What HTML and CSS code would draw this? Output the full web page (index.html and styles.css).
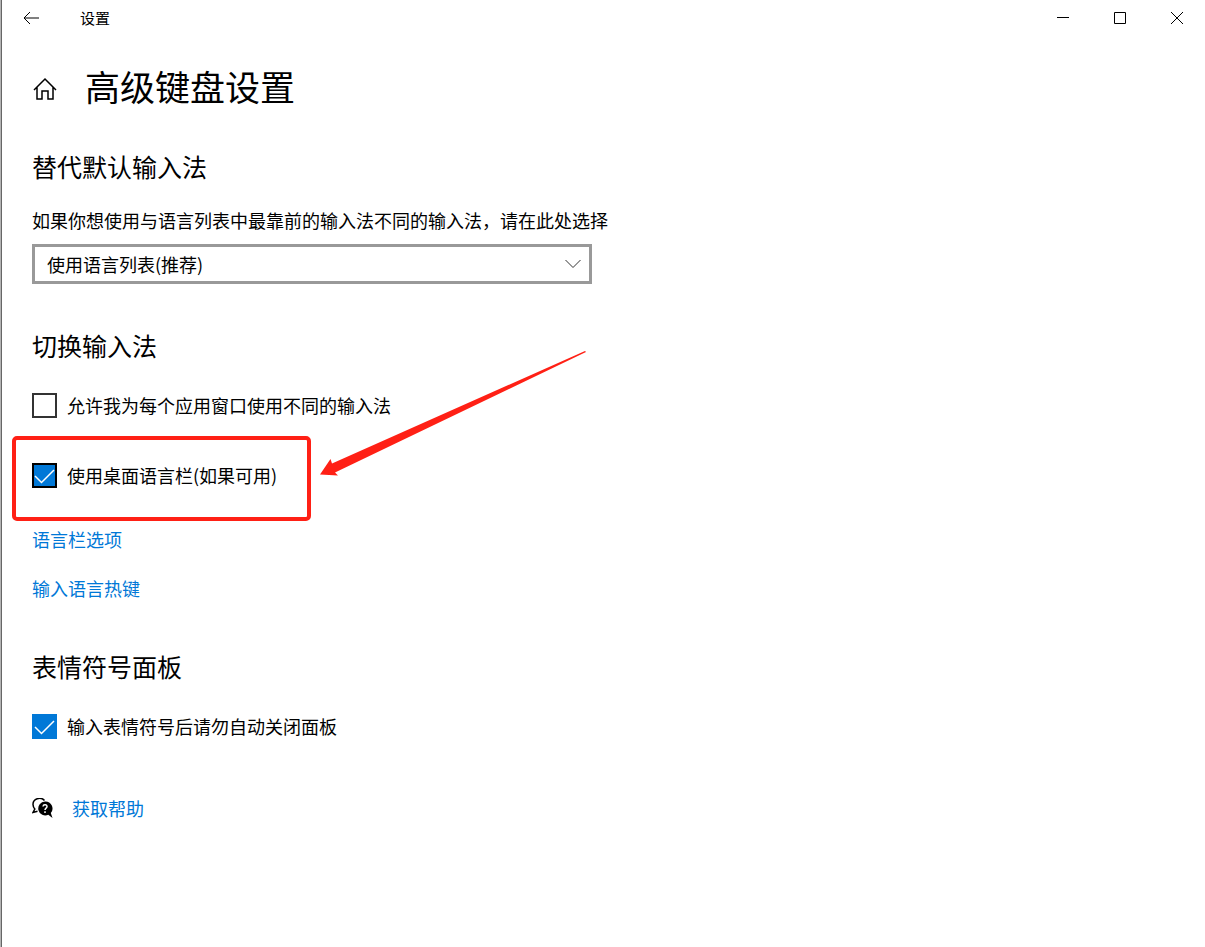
FILE: index.html
```html
<!DOCTYPE html>
<html lang="zh-CN">
<head>
    <meta charset="UTF-8">
    <meta name="viewport" content="width=device-width, initial-scale=1.0">
    <title>设置</title>
    <link rel="stylesheet" href="styles.css">
</head>
<body>
    <div class="window">
        <header class="titlebar">
            <button type="button" class="back" aria-label="返回">
                <svg width="16" height="14" viewBox="0 0 16 14"><path d="M7 1L1 7l6 6M1 7h15" /></svg>
            </button>
            <span class="app-name">设置</span>
            <div class="window-buttons">
                <button type="button" aria-label="最小化">
                    <svg width="12" height="12" viewBox="0 0 12 12"><path d="M0 5.5h12" /></svg>
                </button>
                <button type="button" aria-label="最大化">
                    <svg width="12" height="12" viewBox="0 0 12 12"><path d="M.5.5h11v11H.5z" /></svg>
                </button>
                <button type="button" aria-label="关闭">
                    <svg width="12" height="12" viewBox="0 0 12 12"><path d="M0 0l12 12M12 0L0 12" /></svg>
                </button>
            </div>
        </header>

        <main class="content">
            <div class="page-title">
                <button type="button" class="home" aria-label="主页">
                    <svg width="24" height="24" viewBox="0 0 24 24"><path d="M1 13L12 2l11 11M4 10.500v11.500h5v-8h6v8h5V10.500" /></svg>
                </button>
                <h1>高级键盘设置</h1>
            </div>

            <section>
                <h2>替代默认输入法</h2>
                <label class="description" for="inputMethod">如果你想使用与语言列表中最靠前的输入法不同的输入法，请在此处选择</label>
                <div class="dropdown">
                    <select id="inputMethod">
                        <option>使用语言列表(推荐)</option>
                    </select>
                    <svg width="16" height="10" viewBox="0 0 16 10"><path d="M.5 1L8 8.500 15.500 1" /></svg>
                </div>
            </section>

            <section>
                <h2>切换输入法</h2>
                <div class="options">
                    <div class="option">
                        <input type="checkbox" id="perApp">
                        <label for="perApp">允许我为每个应用窗口使用不同的输入法</label>
                    </div>
                    <div class="option marked">
                        <input type="checkbox" id="langBar" class="outlined" checked>
                        <label for="langBar">使用桌面语言栏(如果可用)</label>
                        <svg class="arrow" width="268" height="128" viewBox="0 0 268 128"><path d="M0 124.500L10.500 109l1.500 4.500L265 1l1 1L15 122.500l3 3z" /></svg>
                    </div>
                </div>
                <div class="links">
                    <a href="#">语言栏选项</a>
                    <a href="#">输入语言热键</a>
                </div>
            </section>

            <section>
                <h2>表情符号面板</h2>
                <div class="option">
                    <input type="checkbox" id="emojiPanel" checked>
                    <label for="emojiPanel">输入表情符号后请勿自动关闭面板</label>
                </div>
            </section>

            <div class="help">
                <svg width="21" height="20" viewBox="0 0 21 20">
                    <path class="bubble-back" d="M12.500 2.500A6.500 6 0 0 0 1 6.500c0 2 .8 3.300 1.800 4.500L1 14.500l4.500-1.300" />
                    <path class="bubble-front" d="M13 3.500a7 7 0 1 0 3.300 13.300L20.500 20l-1.700-5A7 7 0 0 0 13 3.500z" />
                    <path class="question" d="M11 8.500c.2-2.400 4.300-2.200 4 .2-.2 1.500-2 1.300-2 3.300M13 13.300v1.700" />
                </svg>
                <a href="#">获取帮助</a>
            </div>
        </main>
    </div>
</body>
</html>
```
FILE: styles.css
```css
*,
*::before {
    box-sizing: border-box;
}

body {
    margin: 0;
    background-color: #fff;
    border-left: 1px solid #b4b4b4;
    color: #000;
    font-family: "Noto Sans CJK SC", sans-serif;
    font-size: 18px;
    line-height: 24px;
}

.window {
    min-height: 100vh;
    border-left: 1px solid #666;
}

button {
    display: flex;
    align-items: center;
    justify-content: center;
    padding: 0;
    border: 0;
    background: none;
}

svg {
    flex: none;
    fill: none;
    stroke: #000;
}

/* title bar */
.titlebar {
    display: flex;
    align-items: center;
    height: 36px;
}

.back {
    width: 58px;
    height: 36px;
}

.app-name {
    margin-left: 20px;
    font-size: 15px;
}

.window-buttons {
    display: flex;
    margin-left: auto;
}

.window-buttons button {
    width: 57px;
    height: 36px;
}

/* page */
.content {
    padding: 29px 30px;
}

.page-title {
    display: flex;
    align-items: center;
    gap: 28px;
    margin-bottom: 36px;
}

.home {
    width: 25px;
}

.home svg {
    stroke-width: 1.5;
}

h1 {
    margin: 0;
    padding-bottom: 6px;
    font-size: 35px;
    font-weight: 400;
    line-height: 42px;
}

h2 {
    margin: 0;
    font-size: 25px;
    font-weight: 400;
    line-height: 34px;
}

section {
    margin-bottom: 44px;
}

.description {
    display: block;
    margin: 25px 0 12px;
}

.dropdown {
    display: grid;
    align-items: center;
    max-width: 560px;
}

.dropdown select,
.dropdown svg {
    grid-area: 1 / 1;
}

.dropdown select {
    width: 100%;
    height: 40px;
    padding: 0 36px 0 12px;
    border: 3px solid #999;
    border-radius: 0;
    background-color: #fff;
    color: #000;
    font: inherit;
    appearance: none;
}

.dropdown svg {
    justify-self: end;
    margin-right: 11px;
    stroke: #333;
    pointer-events: none;
}

.options {
    display: flex;
    flex-direction: column;
    align-items: flex-start;
    gap: 44px;
}

.option {
    display: flex;
    align-items: center;
    gap: 10px;
    height: 26px;
}

h2 + .option,
h2 + .options {
    margin-top: 30px;
}

.option input {
    width: 25px;
    height: 25px;
    margin: 0;
    border: 2px solid #333;
    background-color: #fff;
    appearance: none;
}

.option input:checked {
    border: 0;
    background: #0078d7 url("data:image/svg+xml,%3Csvg xmlns='http://www.w3.org/2000/svg' viewBox='0 0 25 25'%3E%3Cpath d='M3 13l6.500 6.500L22 7' fill='none' stroke='white' stroke-width='1.500'/%3E%3C/svg%3E") border-box;
}

.option .outlined:checked {
    border: 2px solid #000;
}

/* red frame and arrow around the desktop language bar option */
.marked {
    position: relative;
}

.marked::before {
    content: "";
    position: absolute;
    top: -26px;
    left: -20px;
    width: 299px;
    height: 85px;
    border: 4px solid #ff2015;
    border-radius: 5px;
    pointer-events: none;
}

.arrow {
    position: absolute;
    top: -112px;
    left: 288px;
    fill: #ff2015;
    stroke: none;
    pointer-events: none;
}

.links {
    display: flex;
    flex-direction: column;
    align-items: flex-start;
    gap: 25px;
    margin-top: 39px;
    padding-bottom: 5px;
}

a {
    color: #0078d7;
    text-decoration: none;
}

a:hover {
    color: #666;
}

.help {
    display: flex;
    align-items: center;
    gap: 19px;
    margin-top: 57px;
}

.bubble-back {
    stroke-width: 1.5;
}

.bubble-front {
    fill: #000;
    stroke: none;
}

.question {
    stroke: #fff;
    stroke-width: 1.5;
}
```
